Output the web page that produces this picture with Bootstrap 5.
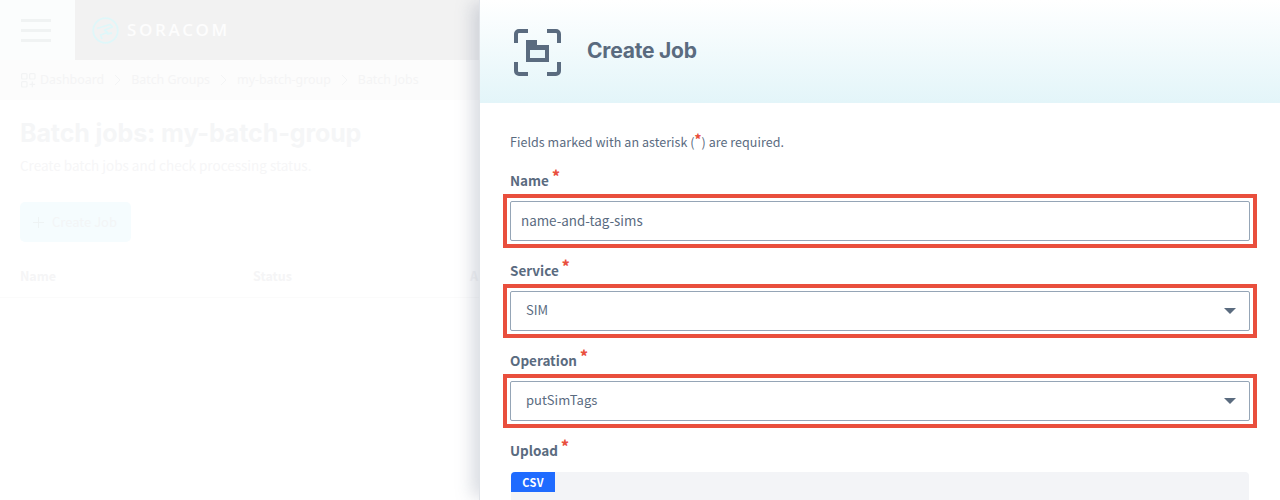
<!DOCTYPE html>
<html lang="en">
<head>
<meta charset="utf-8">
<title>Create Job</title>
<link href="https://cdn.jsdelivr.net/npm/bootstrap@5.3.0/dist/css/bootstrap.min.css" rel="stylesheet">
<script src="https://cdn.jsdelivr.net/npm/bootstrap@5.3.0/dist/js/bootstrap.bundle.min.js"></script>
<style>
html,body{height:500px;overflow:hidden;background:#fff}
body{font-family:"Noto Sans CJK JP","Noto Sans",sans-serif;color:#5a6b7f}
.stage{width:1280px;height:500px;overflow:hidden}
.bg-page{width:480px;height:500px;flex:none;overflow:hidden}
.top-strip{height:60px;background:#f2f2f2}
.burger{width:75px;background:#fbfdfd;padding-left:21px;gap:7px}
.burger span{display:block;width:30px;height:3px;background:#f0f3f3}
.logo-area{padding-left:17px;gap:8px}
.logo-word{font-family:"Open Sans",sans-serif;font-weight:600;font-size:17px;letter-spacing:2.6px;color:#fdfdfd}
.crumbs{height:40px;background:#fcfcfc;padding-left:21px;font-family:"Noto Sans",sans-serif;font-size:12.4px;color:#f4f4f5}
.crumb-sep{margin:0 10px;flex:none}
.page-title{font-family:Inter,sans-serif;font-weight:700;font-size:25px;line-height:30px;color:#f5f6f7;margin:18px 0 0 20px;letter-spacing:-.1px}
.page-sub{font-size:13.5px;line-height:20px;color:#f6f6f7;margin:7px 0 0 20px}
.ghost-btn{width:111px;height:40px;margin:27px 0 0 20px;border-radius:5px;background:#f5fcfe;color:#f3f5f6;font-size:13px;gap:8px;padding-left:13px}
.col-heads{height:42px;margin-top:14px;padding-left:20px;border-bottom:1px solid #fbfbfb;font-size:12.5px;font-weight:700;color:#f5f5f6}
.col-heads div:first-child{width:233px}
.col-heads div:nth-child(2){width:217px}
.drawer{width:801px;height:500px;flex:none;background:#fff;box-shadow:-10px 0 16px -3px rgba(120,130,150,.28);border-left:1px solid #e0e3e8;margin-left:-1px;z-index:2}
.drawer-head{height:103px;background:linear-gradient(#fff,#e3f5f9);padding-left:33px;gap:26px}
.drawer-title{font-family:Inter,sans-serif;font-weight:700;font-size:21px;line-height:26px;color:#5a6b7f;margin:0 0 2px;letter-spacing:-.2px}
.drawer-body{padding:29px 30px 0}
.hint{font-size:12.5px;line-height:20px;height:22px;margin-bottom:13px;letter-spacing:.05px}
.req{color:#e94f3d;font-size:15px;font-weight:900;position:relative;top:-4px;line-height:1}
.hint .req{font-size:13px;top:-3px}
.field-label{display:block;font-size:13.5px;font-weight:700;line-height:20px;color:#5a6b7f;height:27px;padding-top:3px;margin:0}
.mark-box{border:4px solid #e94f3d;padding:3px;margin:0 -7px 9px;height:54px}
.field{height:40px;border:1px solid #95a5b6;border-radius:2px;color:#5a6b7f;display:flex;align-items:center;background:#fff}
input.field{width:100%;padding:0 10px 2px;outline:0;font-family:inherit;font-size:13.4px}
.select-field{padding:0 13px 2px 15px;justify-content:space-between;font-size:13px}
.caret-tri{width:0;height:0;margin-top:2px;border-left:6px solid transparent;border-right:6px solid transparent;border-top:6px solid #5a6b7f}
.upload-box{height:60px;background:#f3f4f7;border-radius:4px 4px 0 0;margin:8px 1px 0}
.csv-tab{width:44px;height:20px;background:#1f6bff;color:#fff;font-size:11px;font-weight:700;letter-spacing:.4px;border-radius:4px 0 0 0;display:flex;align-items:center;justify-content:center}
</style>
</head>
<body>
<div class="stage d-flex">
  <div class="bg-page">
    <div class="top-strip d-flex">
      <div class="burger d-flex flex-column justify-content-center"><span></span><span></span><span></span></div>
      <div class="logo-area d-flex align-items-center">
        <svg width="27" height="27" viewBox="0 0 27 27" fill="none" stroke="#dff7f9" stroke-width="1.8"><circle cx="13.5" cy="13.5" r="12.3"/><path d="M5 11.5 18 7.5l2.5 2.5-8 3 3 2.5-7 2.5 1.5 4M15 17l5-1" stroke-linejoin="round"/></svg>
        <span class="logo-word">SORACOM</span>
      </div>
    </div>
    <div class="crumbs d-flex align-items-center">
      <svg class="me-1" width="15" height="15" viewBox="0 0 15 15" fill="none" stroke="#f2f3f4" stroke-width="1.2"><rect x=".6" y=".6" width="5.4" height="5.4" rx="1"/><rect x="8.6" y=".6" width="5.4" height="5.4" rx="1"/><rect x=".6" y="8.6" width="5.4" height="5.4" rx="1"/><path d="M11.3 8.6v5.6M8.5 11.4h5.6"/></svg>
      <span>Dashboard</span>
      <svg class="crumb-sep" width="7" height="12" viewBox="0 0 7 12" fill="none" stroke="#f3f4f5"><path d="m1 1 5 5-5 5"/></svg><span>Batch Groups</span>
      <svg class="crumb-sep" width="7" height="12" viewBox="0 0 7 12" fill="none" stroke="#f3f4f5"><path d="m1 1 5 5-5 5"/></svg><span>my-batch-group</span>
      <svg class="crumb-sep" width="7" height="12" viewBox="0 0 7 12" fill="none" stroke="#f3f4f5"><path d="m1 1 5 5-5 5"/></svg><span>Batch Jobs</span>
    </div>
    <h1 class="page-title">Batch jobs: my-batch-group</h1>
    <p class="page-sub mb-0">Create batch jobs and check processing status.</p>
    <div class="ghost-btn d-flex align-items-center"><svg width="11" height="11" viewBox="0 0 11 11" stroke="#eef3f4"><path d="M5.5 0v11M0 5.5h11"/></svg><span>Create Job</span></div>
    <div class="col-heads d-flex align-items-center"><div>Name</div><div>Status</div><div>A</div></div>
  </div>
  <div class="drawer position-relative">
    <div class="drawer-head d-flex align-items-center">
      <svg width="48" height="48" viewBox="0 0 48 48" fill="none"><path d="M15 3H6a3 3 0 0 0-3 3v9M34 3h9a3 3 0 0 1 3 3v9M15 46H6a3 3 0 0 1-3-3v-9M34 46h9a3 3 0 0 0 3-3v-9" stroke="#5a6b7f" stroke-width="4"/><path fill="#5a6b7f" d="M13 12h11v5h12v17H13z"/><path fill="#e9f7fa" d="M17 22h15v8H17z"/></svg>
      <h2 class="drawer-title">Create Job</h2>
    </div>
    <div class="drawer-body">
      <div class="hint">Fields marked with an asterisk (<span class="req">*</span>) are required.</div>
      <label class="field-label">Name <span class="req">*</span></label>
      <div class="mark-box"><input class="field" type="text" value="name-and-tag-sims"></div>
      <label class="field-label">Service <span class="req">*</span></label>
      <div class="mark-box"><div class="field select-field"><span>SIM</span><span class="caret-tri"></span></div></div>
      <label class="field-label">Operation <span class="req">*</span></label>
      <div class="mark-box"><div class="field select-field"><span>putSimTags</span><span class="caret-tri"></span></div></div>
      <label class="field-label">Upload <span class="req">*</span></label>
      <div class="upload-box"><div class="csv-tab">CSV</div></div>
    </div>
  </div>
</div>
</body>
</html>
